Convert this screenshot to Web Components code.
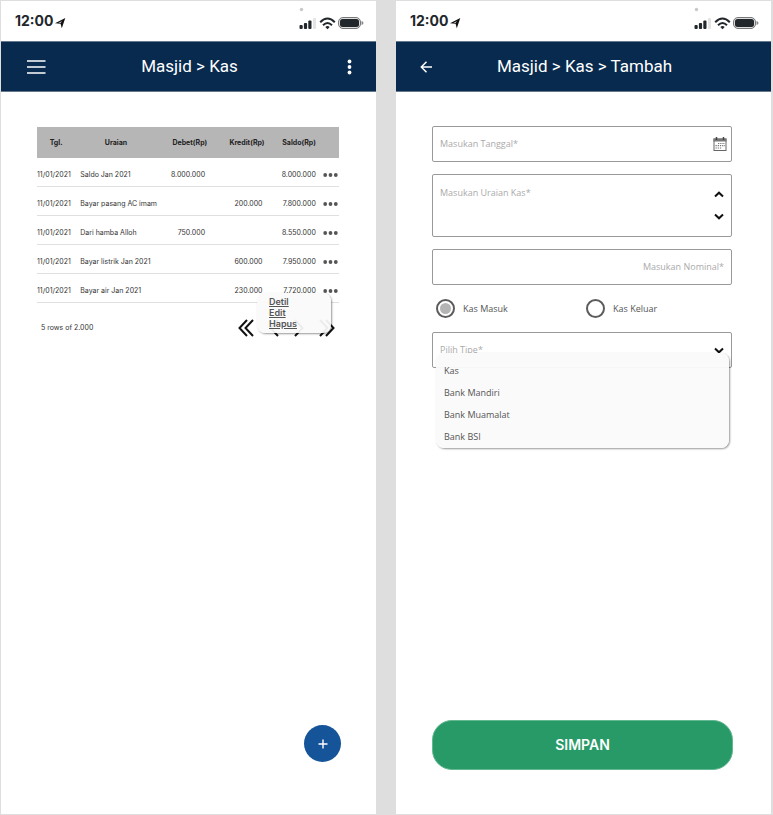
<!DOCTYPE html>
<html lang="id">
<head>
<meta charset="utf-8">
<title>Masjid – Kas</title>
<style>
  body {
    margin: 0;
    padding: 1px 2px 1px 1px;
    box-sizing: border-box;
    min-height: 100vh;
    background: #dedede;
    display: grid;
    grid-template-columns: 1fr 1fr;
    gap: 20px;
    font-family: Inter, "Liberation Sans", sans-serif;
    color: #333;
  }
</style>
</head>
<body>

<phone-screen>
  <status-bar slot="top"></status-bar>
  <app-bar slot="top">
    <icon-button slot="lead" kind="menu" label="Menu"></icon-button>
    Masjid &gt; Kas
    <icon-button slot="trail" kind="more" label="Opsi lain"></icon-button>
  </app-bar>
  <kas-table></kas-table>
  <kas-pager>5 rows of 2.000</kas-pager>
  <add-button slot="bottom"></add-button>
</phone-screen>

<phone-screen>
  <status-bar slot="top"></status-bar>
  <app-bar slot="top">
    <icon-button slot="lead" kind="back" label="Kembali"></icon-button>
    Masjid &gt; Kas &gt; Tambah
  </app-bar>
  <kas-form></kas-form>
  <save-button slot="bottom">SIMPAN</save-button>
</phone-screen>

<script>
const define = (name, html, setup) => {
  const template = document.createElement('template');
  template.innerHTML = `<style>:host, *, ::before, ::after { box-sizing: border-box; }
    button { font: inherit; color: inherit; background: none; border: 0; padding: 0; margin: 0; cursor: pointer; }
    svg { display: block; }</style>` + html;
  customElements.define(name, class extends HTMLElement {
    constructor() {
      super();
      this.attachShadow({ mode: 'open' }).append(template.content.cloneNode(true));
    }
    connectedCallback() {
      if (setup && !this.ready) { this.ready = true; setup(this, this.shadowRoot); }
    }
  });
};

define('phone-screen', `
  <style>
    :host { display: flex; flex-direction: column; background: #fff; min-width: 0; }
    main { flex: 1; padding: 34px 37px 0 36px; }
    footer { display: flex; flex-direction: column; padding: 0 38px 44px 36px; }
  </style>
  <slot name="top"></slot>
  <main><slot></slot></main>
  <footer><slot name="bottom"></slot></footer>`);

define('status-bar', `
  <style>
    :host { display: flex; align-items: center; justify-content: space-between; height: 40px; padding: 0 12px 0 14px; color: #22272b; }
    div { display: flex; align-items: center; gap: 2px; }
    span { font-size: 14px; line-height: 20px; font-weight: 700; }
    .nav { margin-top: 4px; }
  </style>
  <div>
    <span>12:00</span>
    <svg class="nav" width="11" height="12" viewBox="0 0 11 12" aria-hidden="true"><path d="M0 6.300 10.300 1 6.800 11.300 5.600 6.700Z" fill="#111"/><path d="M3.500 5.900 7 4 5.500 5.900Z" fill="#ddd"/></svg>
  </div>
  <svg width="66" height="28" viewBox="0 0 66 28" aria-hidden="true">
    <circle cx="3.500" cy="2.500" r="1.700" fill="#c8c8c8"/>
    <g fill="#22272b">
      <rect x="1.500" y="18" width="3.200" height="4" rx="1"/><rect x="5.900" y="16" width="3.200" height="6" rx="1"/><rect x="10.300" y="13.500" width="3.200" height="8.500" rx="1"/>
    </g>
    <rect x="15" y="11" width="3" height="11" rx="1" fill="#e4e4e4"/>
    <g fill="none" stroke="#22272b" stroke-width="2">
      <path d="M22.200 15.200Q29.500 7.600 36.800 15.200"/><path d="M25 18.200Q29.500 13.800 34 18.200"/>
    </g>
    <path d="M27.300 20Q29.500 18.200 31.700 20L29.500 22.300Z" fill="#22272b"/>
    <rect x="40.500" y="10.500" width="22" height="11" rx="4.500" fill="#ddd" stroke="#777"/>
    <rect x="42" y="12" width="19" height="8" rx="2.500" fill="#22272b"/>
    <path d="M63.500 14Q65.500 14.500 65.500 16T63.500 18Z" fill="#888"/>
  </svg>`);

define('app-bar', `
  <style>
    :host { display: grid; grid-template-columns: 1fr auto 1fr; align-items: center; height: 51px; padding: 0 20px 0 22px;
      background: #072a4e; border: solid #66788c; border-width: 1px 0; color: #fff; }
    h1 { margin: 0; padding-bottom: 2px; font: 400 17px/24px Roboto, sans-serif; }
    .trail { justify-self: end; }
  </style>
  <slot name="lead"></slot>
  <h1><slot></slot></h1>
  <div class="trail"><slot name="trail"></slot></div>`);

const icons = {
  menu: '<path d="M4 6H22.500M4 12H22.500M4 18H22.500" stroke="#fff" stroke-width="1.500"/>',
  more: '<g fill="#fff"><circle cx="19.500" cy="6.500" r="1.900"/><circle cx="19.500" cy="12" r="1.900"/><circle cx="19.500" cy="17.500" r="1.900"/></g>',
  back: '<path d="M14 12H3.500M8.500 6.800 3.300 12 8.500 17.200" fill="none" stroke="#fff" stroke-width="1.500"/>'
};
define('icon-button', `
  <style>:host, button { display: block; }</style>
  <button type="button"><svg width="26" height="24" viewBox="0 0 26 24" aria-hidden="true"></svg></button>`,
  (el, root) => {
    root.querySelector('svg').innerHTML = icons[el.getAttribute('kind')];
    root.querySelector('button').setAttribute('aria-label', el.getAttribute('label'));
  });

define('kas-table', `
  <style>
    :host { display: block; margin-top: 1px; }
    table { width: 100%; table-layout: fixed; border-collapse: separate; border-spacing: 0; font-size: 7px; line-height: 10px; }
    th { height: 31px; padding: 0; background: #b6b6b6; color: #222; font-weight: 700; white-space: nowrap; }
    td { height: 29px; padding: 6px 0 0; border-bottom: 1px solid #e0e0e0; white-space: nowrap; vertical-align: middle; }
    .date { width: 14%; }
    .desc { width: 24%; padding-left: 1px; }
    .sum { width: 19%; text-align: right; padding-right: 2px; }
    .total { width: 17%; text-align: right; padding-right: 2px; }
    .act { width: 7%; text-align: right; position: relative; }
    th.date { padding-right: 4px; }
    td.sum { padding-right: 4px; }
    .act button { vertical-align: middle; }
  </style>
  <table>
    <thead><tr>
      <th class="date" scope="col">Tgl.</th><th class="desc" scope="col">Uraian</th>
      <th class="sum" scope="col">Debet(Rp)</th><th class="sum" scope="col">Kredit(Rp)</th>
      <th class="total" scope="col">Saldo(Rp)</th><th class="act"></th>
    </tr></thead>
    <tbody></tbody>
  </table>`,
  (el, root) => {
    const rows = [
      ['Saldo Jan 2021', '8.000.000', '', '8.000.000'],
      ['Bayar pasang AC imam', '', '200.000', '7.800.000'],
      ['Dari hamba Alloh', '750.000', '', '8.550.000'],
      ['Bayar listrik Jan 2021', '', '600.000', '7.950.000'],
      ['Bayar air Jan 2021', '', '230.000', '7.720.000']
    ];
    root.querySelector('tbody').innerHTML = rows.map(([d, i, o, s], n) => `<tr>
      <td class="date">11/01/2021</td><td class="desc">${d}</td><td class="sum">${i}</td><td class="sum">${o}</td><td class="total">${s}</td>
      <td class="act"><button type="button" aria-label="Aksi ${d}"><svg width="16" height="6" viewBox="0 0 16 6"><g fill="#555"><circle cx="2.200" cy="3" r="1.900"/><circle cx="7.500" cy="3" r="1.900"/><circle cx="12.800" cy="3" r="1.900"/></g></svg></button>${n === rows.length - 1 ? '<row-menu></row-menu>' : ''}</td></tr>`).join('');
  });

define('row-menu', `
  <style>
    :host { position: absolute; top: 19px; right: 8px; width: 74px; padding: 3px 12px 4px; display: flex; flex-direction: column; align-items: flex-start;
      background: rgba(250, 250, 250, .94); border-radius: 8px; box-shadow: 1px 1px 2px rgba(0, 0, 0, .4); }
    a { font: 600 9px/11px Inter, sans-serif; color: #555; text-decoration: underline; }
  </style>
  <a href="#detil">Detil</a><a href="#edit">Edit</a><a href="#hapus">Hapus</a>`);

define('kas-pager', `
  <style>
    :host { display: flex; align-items: center; justify-content: space-between; padding: 0 4px; margin-top: 16px; font-size: 7px; line-height: 10px; }
    nav { display: flex; justify-content: space-between; width: 97px; }
    path { fill: none; stroke: #111; stroke-width: 2; }
  </style>
  <span><slot></slot></span>
  <nav aria-label="Halaman">
    <button type="button" aria-label="Pertama"><svg width="16" height="18" viewBox="0 0 16 18"><path d="M9 1 1.500 9 9 17M15 1 7.500 9 15 17"/></svg></button>
    <button type="button" aria-label="Sebelumnya"><svg width="10" height="18" viewBox="0 0 10 18"><path d="M9 1 1.500 9 9 17"/></svg></button>
    <button type="button" aria-label="Berikutnya"><svg width="10" height="18" viewBox="0 0 10 18"><path d="M1 1 8.500 9 1 17"/></svg></button>
    <button type="button" aria-label="Terakhir"><svg width="16" height="18" viewBox="0 0 16 18"><path d="M1 1 8.500 9 1 17M7 1 14.500 9 7 17"/></svg></button>
  </nav>`);

define('add-button', `
  <style>
    :host { align-self: flex-end; margin: 0 -3px 8px 0; }
    button { display: grid; place-items: center; width: 37px; height: 37px; border-radius: 50%; background: #155499; }
  </style>
  <button type="button" aria-label="Tambah"><svg width="10" height="10" viewBox="0 0 10 10"><path d="M5 .5V9.500M.5 5H9.500" stroke="#fff" stroke-width="1.400"/></svg></button>`);

define('save-button', `
  <style>
    :host { display: block; }
    button { width: 100%; height: 50px; border: 1px solid #62b890; border-radius: 20px; background: #289a67; color: #fff; font-size: 14px; line-height: 20px; font-weight: 600; }
  </style>
  <button type="button"><slot></slot></button>`);

/* Outlined frame shared by every input; the trailing slot holds its icons. */
define('field-box', `
  <style>
    :host { display: flex; align-items: stretch; height: 36px; border: 1px solid #999; border-radius: 2px; }
    :host([tall]) { height: 63px; }
    .control { flex: 1; min-width: 0; display: flex; }
    .trail { display: flex; flex-direction: column; justify-content: center; gap: 13px; padding-right: 4px; }
    :host([tall]) .trail { padding-right: 7px; }
  </style>
  <div class="control"><slot></slot></div>
  <div class="trail"><slot name="trail"></slot></div>`);

define('radio-choice', `
  <style>
    :host { display: flex; }
    label { display: flex; align-items: center; gap: 8px; font: 9px/12px "Open Sans", sans-serif; color: #555; }
    input { appearance: none; display: grid; place-items: center; width: 19px; height: 19px; margin: 0; border: 2px solid #5c5c5c; border-radius: 50%; }
    input:checked::before { content: ""; width: 11px; height: 11px; border-radius: 50%; background: #b4b4b4; }
  </style>
  <label><input type="radio"><span><slot></slot></span></label>`,
  (el, root) => {
    const input = root.querySelector('input');
    input.checked = el.hasAttribute('checked');
    input.addEventListener('change', () => {
      for (const other of el.parentNode.querySelectorAll('radio-choice'))
        if (other !== el) other.shadowRoot.querySelector('input').checked = false;
    });
  });

define('option-list', `
  <style>
    :host { position: absolute; top: 21px; left: 4px; right: 3px; display: flex; flex-direction: column; padding-top: 7px;
      background: rgba(250, 250, 250, .96); border-radius: 8px; box-shadow: 1px 1px 2px rgba(0, 0, 0, .4); }
    :host([hidden]) { display: none; }
    button { padding-left: 8px; text-align: left; font: 9px/22px "Open Sans", sans-serif; color: #555; }
  </style>
  <button type="button">Kas</button><button type="button">Bank Mandiri</button><button type="button">Bank Muamalat</button><button type="button">Bank BSI</button>`,
  (el, root) => root.addEventListener('click', e => {
    if (e.target.matches('button')) el.dispatchEvent(new CustomEvent('pick', { detail: e.target.textContent }));
  }));

define('kas-form', `
  <style>
    :host { display: block; margin-right: 2px; }
    form { display: flex; flex-direction: column; gap: 12px; }
    input, textarea, select { flex: 1; min-width: 0; width: 100%; margin: 0; padding: 0 7px; border: 0; outline: 0; background: none; appearance: none; resize: none;
      font: 9px/12px "Open Sans", sans-serif; color: #555; }
    textarea { padding-top: 12px; }
    .end { text-align: right; padding-right: 3px; }
    ::placeholder, select { color: #aaa; opacity: 1; }
    .radios { display: grid; grid-template-columns: 1fr 1fr; gap: 4px; align-items: center; height: 23px; padding-left: 4px; }
    .type { position: relative; }
    .chev { fill: none; stroke: #111; stroke-width: 2; }
    field-box.pick button { padding-right: 3px; }
  </style>
  <form>
    <field-box>
      <input type="text" aria-label="Tanggal" placeholder="Masukan Tanggal*">
      <button slot="trail" type="button" aria-label="Pilih tanggal">
        <svg width="14" height="14" viewBox="0 0 14 14">
          <rect x="1" y="2" width="12" height="11.500" fill="#fff" stroke="#666"/>
          <path d="M.5 1.500H13.500V4.500H.5Z" fill="#777"/><path d="M3.500 0V3M10.500 0V3" stroke="#444" stroke-width="1.500"/>
          <path d="M5 6.500H12M2.500 8.700H12M2.500 11H9" stroke="#777" stroke-width="1.200" stroke-dasharray="1.300 .9"/>
        </svg>
      </button>
    </field-box>
    <field-box tall>
      <textarea aria-label="Uraian Kas" placeholder="Masukan Uraian Kas*"></textarea>
      <button slot="trail" type="button" aria-label="Naik"><svg width="10" height="9" viewBox="0 0 10 9"><path class="chev" d="M1 6.500 5 2.700 9 6.500"/></svg></button>
      <button slot="trail" type="button" aria-label="Turun"><svg width="10" height="9" viewBox="0 0 10 9"><path class="chev" d="M1 2.500 5 6.300 9 2.500"/></svg></button>
    </field-box>
    <field-box>
      <input class="end" type="text" inputmode="numeric" aria-label="Nominal" placeholder="Masukan Nominal*">
    </field-box>
    <div class="radios" role="radiogroup" aria-label="Arah kas">
      <radio-choice checked>Kas Masuk</radio-choice>
      <radio-choice>Kas Keluar</radio-choice>
    </div>
    <div class="type">
      <field-box class="pick">
        <select aria-label="Tipe"><option>Pilih Tipe*</option></select>
        <button slot="trail" type="button" aria-label="Buka pilihan"><svg width="10" height="9" viewBox="0 0 10 9"><path class="chev" d="M1 2.500 5 6.300 9 2.500"/></svg></button>
      </field-box>
      <option-list></option-list>
    </div>
  </form>`,
  (el, root) => {
    const list = root.querySelector('option-list');
    const select = root.querySelector('select');
    list.addEventListener('pick', e => { select.options[0].textContent = e.detail; list.hidden = true; });
    root.querySelector('.pick button').addEventListener('click', () => { list.hidden = !list.hidden; });
  });
</script>
</body>
</html>
